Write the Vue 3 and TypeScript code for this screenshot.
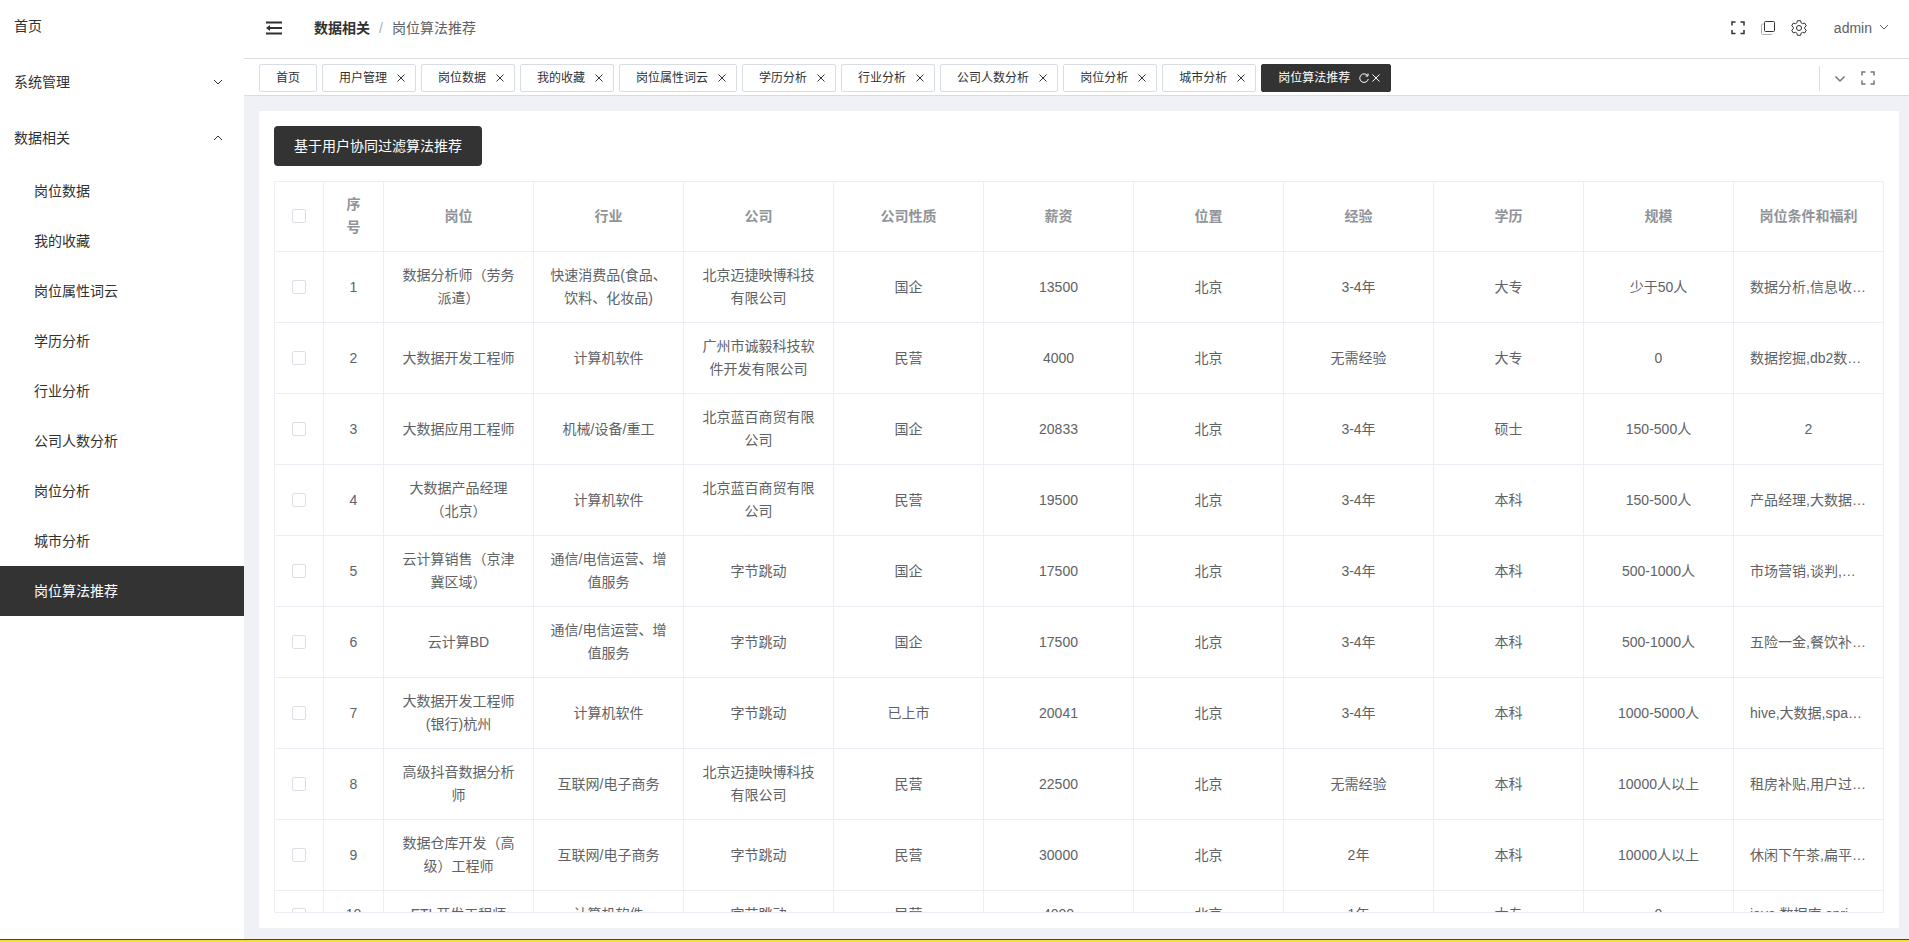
<script setup lang="ts">
import { ref } from 'vue'

interface Job {
  post: string
  industry: string
  company: string
  nature: string
  salary: string
  city: string
  experience: string
  degree: string
  scale: string
  welfare: string
}

const subMenu: string[] = [
  '岗位数据', '我的收藏', '岗位属性词云', '学历分析', '行业分析',
  '公司人数分析', '岗位分析', '城市分析', '岗位算法推荐',
]
const tabs: string[] = [
  '首页', '用户管理', '岗位数据', '我的收藏', '岗位属性词云', '学历分析',
  '行业分析', '公司人数分析', '岗位分析', '城市分析', '岗位算法推荐',
]
const active = ref('岗位算法推荐')

const columns: string[] = [
  '岗位', '行业', '公司', '公司性质', '薪资', '位置', '经验', '学历', '规模', '岗位条件和福利',
]

const toJob = (v: string[]): Job => ({
  post: v[0], industry: v[1], company: v[2], nature: v[3], salary: v[4],
  city: v[5], experience: v[6], degree: v[7], scale: v[8], welfare: v[9],
})

const jobs: Job[] = [
  ['数据分析师（劳务派遣）', '快速消费品(食品、饮料、化妆品)', '北京迈捷映博科技有限公司', '国企', '13500', '北京', '3-4年', '大专', '少于50人', '数据分析,信息收…'],
  ['大数据开发工程师', '计算机软件', '广州市诚毅科技软件开发有限公司', '民营', '4000', '北京', '无需经验', '大专', '0', '数据挖掘,db2数…'],
  ['大数据应用工程师', '机械/设备/重工', '北京蓝百商贸有限公司', '国企', '20833', '北京', '3-4年', '硕士', '150-500人', '2'],
  ['大数据产品经理（北京）', '计算机软件', '北京蓝百商贸有限公司', '民营', '19500', '北京', '3-4年', '本科', '150-500人', '产品经理,大数据…'],
  ['云计算销售（京津冀区域）', '通信/电信运营、增值服务', '字节跳动', '国企', '17500', '北京', '3-4年', '本科', '500-1000人', '市场营销,谈判,…'],
  ['云计算BD', '通信/电信运营、增值服务', '字节跳动', '国企', '17500', '北京', '3-4年', '本科', '500-1000人', '五险一金,餐饮补…'],
  ['大数据开发工程师(银行)杭州', '计算机软件', '字节跳动', '已上市', '20041', '北京', '3-4年', '本科', '1000-5000人', 'hive,大数据,spa…'],
  ['高级抖音数据分析师', '互联网/电子商务', '北京迈捷映博科技有限公司', '民营', '22500', '北京', '无需经验', '本科', '10000人以上', '租房补贴,用户过…'],
  ['数据仓库开发（高级）工程师', '互联网/电子商务', '字节跳动', '民营', '30000', '北京', '2年', '本科', '10000人以上', '休闲下午茶,扁平…'],
  ['ETL开发工程师', '计算机软件', '字节跳动', '民营', '4000', '北京', '1年', '大专', '0', 'java,数据库,spri…'],
].map(toJob)
</script>

<template>
  <div class="app">
    <div class="shell">
      <nav class="sidebar" aria-label="主菜单">
        <a class="menu-item home" href="#">首页</a>
        <button class="menu-item" type="button" aria-expanded="false">
          系统管理
          <svg class="i12" viewBox="0 0 12 12"><path d="M2 4 6 8 10 4" /></svg>
        </button>
        <button class="menu-item" type="button" aria-expanded="true">
          数据相关
          <svg class="i12" viewBox="0 0 12 12"><path d="M2 8 6 4 10 8" /></svg>
        </button>
        <a
          v-for="item in subMenu"
          :key="item"
          class="sub-item"
          :class="{ active: item === active }"
          href="#"
          @click.prevent="active = item"
        >{{ item }}</a>
      </nav>

      <div class="main">
        <header class="topbar">
          <button class="icon-btn" type="button" aria-label="收起菜单">
            <svg class="i16 fold" viewBox="0 0 16 16">
              <path d="M0 2.500h16M6 8h10M0 13.500h16" />
              <path class="solid" d="M0 8 4 5v6zM4 7h3v2H4z" />
            </svg>
          </button>
          <nav class="crumbs" aria-label="面包屑">
            <a href="#">数据相关</a><span class="slash">/</span><span>岗位算法推荐</span>
          </nav>
          <div class="tools">
            <button class="icon-btn" type="button" aria-label="全屏">
              <svg class="i14 dark" viewBox="0 0 14 14"><path d="M1 4.500V1h3.500M9.500 1H13v3.500M13 9v3.500H9.500M4.500 12.500H1V9" /></svg>
            </button>
            <button class="icon-btn" type="button" aria-label="布局大小">
              <svg class="i14" viewBox="0 0 14 14">
                <rect x="3.500" y=".5" width="10" height="10" rx="1" />
                <path class="pale" d="M2.500 3H1.500Q.5 3 .5 4v8.500q0 1 1 1H10q1 0 1-1" />
              </svg>
            </button>
            <button class="icon-btn" type="button" aria-label="设置">
              <svg class="i16" viewBox="0 0 16 16">
                <path d="M6.400.7h3.200l.5 2.100 1.500.9 2.100-.7 1.600 2.800-1.600 1.400v1.600l1.600 1.400-1.600 2.800-2.100-.7-1.500.9-.5 2.100H6.400l-.5-2.100-1.500-.9-2.100.7L.7 10.200l1.600-1.400V7.200L.7 5.800 2.300 3l2.100.7 1.500-.9z" />
                <circle cx="8" cy="8" r="2.500" />
              </svg>
            </button>
            <button class="user" type="button">
              admin
              <svg class="i12" viewBox="0 0 12 12"><path d="M2 3l4 4 4-4" /></svg>
            </button>
          </div>
        </header>

        <div class="tabbar">
          <div
            v-for="(tab, i) in tabs"
            :key="tab"
            class="tab"
            :class="{ active: tab === active, plain: i === 0 }"
          >
            <a href="#" @click.prevent="active = tab">{{ tab }}</a>
            <span v-if="i > 0" class="tab-icons">
              <button v-if="tab === active" class="icon-btn" type="button" aria-label="刷新">
                <svg class="i12" viewBox="0 0 12 12"><path d="M9.500 3.500A4.300 4.300 0 1 0 10.300 7M10 1.500v2.500H7.500" /></svg>
              </button>
              <button class="icon-btn" type="button" aria-label="关闭">
                <svg class="i12" viewBox="0 0 12 12"><path d="m2.500 2.500 7 7M9.500 2.500l-7 7" /></svg>
              </button>
            </span>
          </div>
          <div class="tab-tools">
            <button class="icon-btn" type="button" aria-label="更多标签">
              <svg class="i12 thick" viewBox="0 0 12 12"><path d="M1.500 4.500 6 9l4.500-4.500" /></svg>
            </button>
            <button class="icon-btn" type="button" aria-label="内容全屏">
              <svg class="i14 thick" viewBox="0 0 14 14"><path d="M1 4.500V1h3.500M9.500 1H13v3.500M13 9.500V13H9.500M4.500 13H1V9.500" /></svg>
            </button>
          </div>
        </div>

        <main class="content">
          <section class="card">
            <button class="primary" type="button">基于用户协同过滤算法推荐</button>
            <div class="table-wrap">
              <table>
                <colgroup>
                  <col class="c-check"><col class="c-index">
                  <col v-for="c in columns" :key="c">
                </colgroup>
                <thead>
                  <tr>
                    <th><input type="checkbox" aria-label="全选"></th>
                    <th class="index">序号</th>
                    <th v-for="c in columns" :key="c">{{ c }}</th>
                  </tr>
                </thead>
                <tbody>
                  <tr v-for="(job, i) in jobs" :key="i">
                    <td><input type="checkbox" :aria-label="`选择第${i + 1}行`"></td>
                    <td>{{ i + 1 }}</td>
                    <td>{{ job.post }}</td>
                    <td>{{ job.industry }}</td>
                    <td>{{ job.company }}</td>
                    <td>{{ job.nature }}</td>
                    <td>{{ job.salary }}</td>
                    <td>{{ job.city }}</td>
                    <td>{{ job.experience }}</td>
                    <td>{{ job.degree }}</td>
                    <td>{{ job.scale }}</td>
                    <td class="welfare" :class="{ cut: job.welfare.endsWith('…') }">{{ job.welfare }}</td>
                  </tr>
                </tbody>
              </table>
            </div>
          </section>
        </main>
      </div>
    </div>
    <div class="strip"></div>
  </div>
</template>

<style>
body {
  margin: 0;
}
</style>

<style scoped>
* {
  box-sizing: border-box;
}
.app {
  display: flex;
  flex-direction: column;
  height: 100vh;
  background: #fff;
  color: #303133;
  font: 14px/23px "Liberation Sans", "Noto Sans CJK SC", sans-serif;
}
.shell {
  flex: 1;
  display: flex;
  min-height: 0;
}
.strip {
  height: 3px;
  border-top: 1px solid #44453f;
  background: #f8dc3b;
}
a {
  color: inherit;
  text-decoration: none;
}
button {
  padding: 0;
  border: 0;
  background: none;
  color: inherit;
  font: inherit;
  cursor: pointer;
}
svg {
  display: block;
  fill: none;
  stroke: currentColor;
  stroke-width: 1;
}
.i12 {
  width: 12px;
  height: 12px;
}
.i14 {
  width: 14px;
  height: 14px;
}
.i16 {
  width: 16px;
  height: 16px;
}
.dark {
  stroke-width: 1.5;
}
.thick {
  stroke-width: 1.5;
}
.fold {
  stroke-width: 2;
}
.solid {
  fill: currentColor;
  stroke: none;
}
.pale {
  stroke: #a8abb2;
}
.icon-btn {
  display: flex;
}

.sidebar {
  flex: none;
  display: flex;
  flex-direction: column;
  width: 244px;
}
.menu-item {
  display: flex;
  align-items: center;
  justify-content: space-between;
  height: 56px;
  padding: 0 20px 0 14px;
}
.home {
  height: 54px;
  padding-bottom: 2px;
}
.sub-item {
  height: 50px;
  padding-left: 34px;
  line-height: 50px;
}
.sub-item.active {
  background: #333;
  color: #fff;
}

.main {
  flex: 1;
  display: flex;
  flex-direction: column;
  min-width: 0;
}
.topbar {
  display: flex;
  align-items: center;
  height: 59px;
  padding: 0 19px 2px 22px;
  border-bottom: 1px solid #d8dce5;
}
.crumbs {
  margin-left: 32px;
  color: #606266;
}
.crumbs a {
  color: #303133;
  font-weight: 700;
}
.slash {
  margin: 0 9px;
  color: #a8abb2;
}
.tools {
  display: flex;
  align-items: center;
  gap: 16px;
  margin-left: auto;
}
.user {
  display: flex;
  align-items: center;
  gap: 6px;
  margin-left: 11px;
  color: #606266;
}
.tabbar {
  display: flex;
  align-items: center;
  gap: 5px;
  height: 37px;
  padding: 2px 34px 0 15px;
  border-bottom: 1px solid #d8dce5;
  font-size: 12px;
}
.tab {
  display: flex;
  align-items: center;
  gap: 8px;
  height: 28px;
  padding: 0 8px 0 16px;
  border: 1px solid #d8dce5;
  border-radius: 2px;
  white-space: nowrap;
}
.tab.plain {
  padding-right: 16px;
}
.tab.active {
  border-color: #333;
  background: #333;
  color: #fff;
}
.tab-icons {
  display: flex;
}
.tab-tools {
  display: flex;
  align-items: center;
  gap: 15px;
  height: 25px;
  margin-left: auto;
  padding-left: 14px;
  border-left: 1px solid #d8dce5;
  color: #73767a;
}

.content {
  flex: 1;
  display: flex;
  min-height: 0;
  padding: 15px 10px 11px 15px;
  background: #f0f1f6;
}
.card {
  flex: 1;
  display: flex;
  flex-direction: column;
  align-items: flex-start;
  gap: 15px;
  min-width: 0;
  padding: 15px;
  background: #fff;
}
.primary {
  flex: none;
  height: 40px;
  padding: 0 20px;
  border-radius: 4px;
  background: #333;
  color: #fff;
}
.table-wrap {
  flex: 1;
  align-self: stretch;
  min-height: 0;
  overflow: auto;
  scrollbar-width: none;
  border: 1px solid #ebeef5;
  border-right: 0;
}
table {
  width: 100%;
  table-layout: fixed;
  border-collapse: separate;
  border-spacing: 0;
  color: #606266;
}
.c-check {
  width: 49px;
}
.c-index {
  width: 60px;
}
th,
td {
  padding: 12px 15px;
  border: solid #ebeef5;
  border-width: 0 1px 1px 0;
  text-align: center;
  word-break: break-all;
}
th {
  height: 70px;
  padding: 11px 15px 12px;
  color: #909399;
  font-weight: 700;
}
.index {
  padding-right: 16px;
  padding-left: 16px;
}
.welfare {
  white-space: nowrap;
}
.cut {
  padding-right: 14px;
  padding-left: 16px;
  text-align: left;
}
input {
  display: block;
  appearance: none;
  width: 14px;
  height: 14px;
  margin: 0 auto;
  border: 1px solid #dcdfe6;
  border-radius: 2px;
  background: #fff;
}
input:checked {
  border-color: #333;
  background: #333;
}
th:first-child,
td:first-child {
  padding-right: 0;
  padding-left: 0;
}
</style>
